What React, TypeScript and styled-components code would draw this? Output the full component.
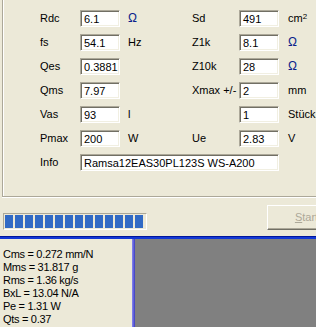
import React from "react";
import styled, { createGlobalStyle } from "styled-components";

const Global = createGlobalStyle`
  html, body { margin: 0; padding: 0; }
  body {
    background: #ece9d8;
    font-family: "Liberation Sans", Arial, sans-serif;
    font-size: 11px;
    color: #000;
    width: 316px;
    height: 327px;
    overflow: hidden;
  }
`;

const Page = styled.div`
  width: 316px;
  height: 327px;
  overflow: hidden;
  display: flex;
  flex-direction: column;
  background: #ece9d8;
`;

const GroupBox = styled.div`
  margin-left: 2px;
  width: 360px;
  flex: none;
  border-left: 1px solid #aca899;
  border-bottom: 1px solid #aca899;
  box-shadow: inset 1px 0 0 #fff, 0 1px 0 #fff;
  padding: 10px 0 25px 37px;
`;

const Form = styled.div`
  display: grid;
  grid-template-columns: 40px 40px 72px 47px 40px 60px;
  grid-auto-rows: 17px;
  row-gap: 7px;
  align-items: center;
`;

const Label = styled.div<{ $col: number }>`
  grid-column: ${(p) => p.$col};
  white-space: nowrap;
  line-height: 13px;
`;

const Unit = styled.div<{ $col: number; $omega?: boolean }>`
  grid-column: ${(p) => p.$col};
  padding-left: ${(p) => (p.$col === 3 ? 8 : 9)}px;
  white-space: nowrap;
  line-height: 13px;
  color: ${(p) => (p.$omega ? "#0b1f8c" : "#000")};
  font-size: ${(p) => (p.$omega ? 12 : 11)}px;
  sup { font-size: 8px; vertical-align: 3px; line-height: 0; }
`;

const Field = styled.div<{ $col: number; $span?: number }>`
  grid-column: ${(p) => p.$col} / span ${(p) => p.$span ?? 1};
  height: 17px;
  box-sizing: border-box;
  background: #fff;
  border-top: 1px solid #aca899;
  border-left: 1px solid #aca899;
  border-bottom: 1px solid #fff;
  border-right: 1px solid #fff;
  box-shadow: inset 1px 1px 0 #716f64, inset -1px -1px 0 #f1efe2;
  padding: 1px 0 0 3px;
  line-height: 14px;
  white-space: nowrap;
  overflow: hidden;
`;

const Toolbar = styled.div`
  height: 39px;
  flex: none;
  display: flex;
  justify-content: space-between;
  align-items: flex-start;
  padding-left: 3px;
  overflow: hidden;
`;

const Progress = styled.div`
  margin-top: 16px;
  width: 144px;
  height: 17px;
  box-sizing: border-box;
  border-top: 1px solid #aca899;
  border-left: 1px solid #aca899;
  border-bottom: 1px solid #fff;
  border-right: 1px solid #fff;
  padding: 1px 1px;
  display: flex;
  gap: 2px;
`;

const Block = styled.div`
  width: 8px;
  height: 13px;
  background: #316ac5;
  flex: none;
`;

const StartButton = styled.div`
  margin-top: 8px;
  margin-right: -26px;
  width: 75px;
  height: 25px;
  box-sizing: border-box;
  flex: none;
  border-top: 1px solid #fff;
  border-left: 1px solid #fff;
  border-bottom: 1px solid #716f64;
  border-right: 1px solid #716f64;
  box-shadow: inset -1px -1px 0 #aca899;
  color: #aca899;
  text-align: center;
  line-height: 22px;
  padding-left: 4px;
  u { text-decoration: underline; }
`;

const BlueRule = styled.div`
  height: 3px;
  flex: none;
  background: linear-gradient(#00169c 0, #00169c 1px, #1238d4 1px, #1238d4 3px);
`;

const Lower = styled.div`
  flex: 1;
  display: flex;
  min-height: 0;
`;

const ResultPanel = styled.div`
  width: 132px;
  flex: none;
  padding: 9px 0 0 3px;
  box-sizing: border-box;
  line-height: 13px;
  letter-spacing: -0.3px;
  white-space: nowrap;
  overflow: hidden;
`;

const Splitter = styled.div`
  width: 3px;
  flex: none;
  background: linear-gradient(90deg, #8888ee, #5c5cd8 60%, #3c3cb8);
`;

const GrayArea = styled.div`
  flex: 1;
  background: #808080;
`;

const left = [
  { l: "Rdc", v: "6.1", u: "Ω", o: true },
  { l: "fs", v: "54.1", u: "Hz" },
  { l: "Qes", v: "0.3881", u: "" },
  { l: "Qms", v: "7.97", u: "" },
  { l: "Vas", v: "93", u: "l" },
  { l: "Pmax", v: "200", u: "W" },
];

const right = [
  { l: "Sd", v: "491", u: "cm²" },
  { l: "Z1k", v: "8.1", u: "Ω", o: true },
  { l: "Z10k", v: "28", u: "Ω", o: true },
  { l: "Xmax +/-", v: "2", u: "mm" },
  { l: "", v: "1", u: "Stück" },
  { l: "Ue", v: "2.83", u: "V" },
];

const results = [
  "Cms = 0.272 mm/N",
  "Mms = 31.817 g",
  "Rms = 1.36 kg/s",
  "BxL = 13.04 N/A",
  "Pe = 1.31 W",
  "Qts = 0.37",
];

export default function App() {
  return (
    <>
      <Global />
      <Page>
        <GroupBox>
          <Form>
            {left.map((a, i) => {
              const b = right[i];
              return (
                <React.Fragment key={i}>
                  <Label $col={1}>{a.l}</Label>
                  <Field $col={2}>{a.v}</Field>
                  <Unit $col={3} $omega={a.o}>{a.u}</Unit>
                  <Label $col={4}>{b.l}</Label>
                  <Field $col={5}>{b.v}</Field>
                  <Unit $col={6} $omega={b.o}>
                    {b.u === "cm²" ? (
                      <>
                        cm<sup>2</sup>
                      </>
                    ) : (
                      b.u
                    )}
                  </Unit>
                </React.Fragment>
              );
            })}
            <Label $col={1}>Info</Label>
            <Field $col={2} $span={4}>Ramsa12EAS30PL123S WS-A200</Field>
          </Form>
        </GroupBox>
        <Toolbar>
          <Progress>
            {Array.from({ length: 14 }).map((_, i) => (
              <Block key={i} />
            ))}
          </Progress>
          <StartButton>
            <u>S</u>tart
          </StartButton>
        </Toolbar>
        <BlueRule />
        <Lower>
          <ResultPanel>
            {results.map((r) => (
              <div key={r}>{r}</div>
            ))}
          </ResultPanel>
          <Splitter />
          <GrayArea />
        </Lower>
      </Page>
    </>
  );
}
